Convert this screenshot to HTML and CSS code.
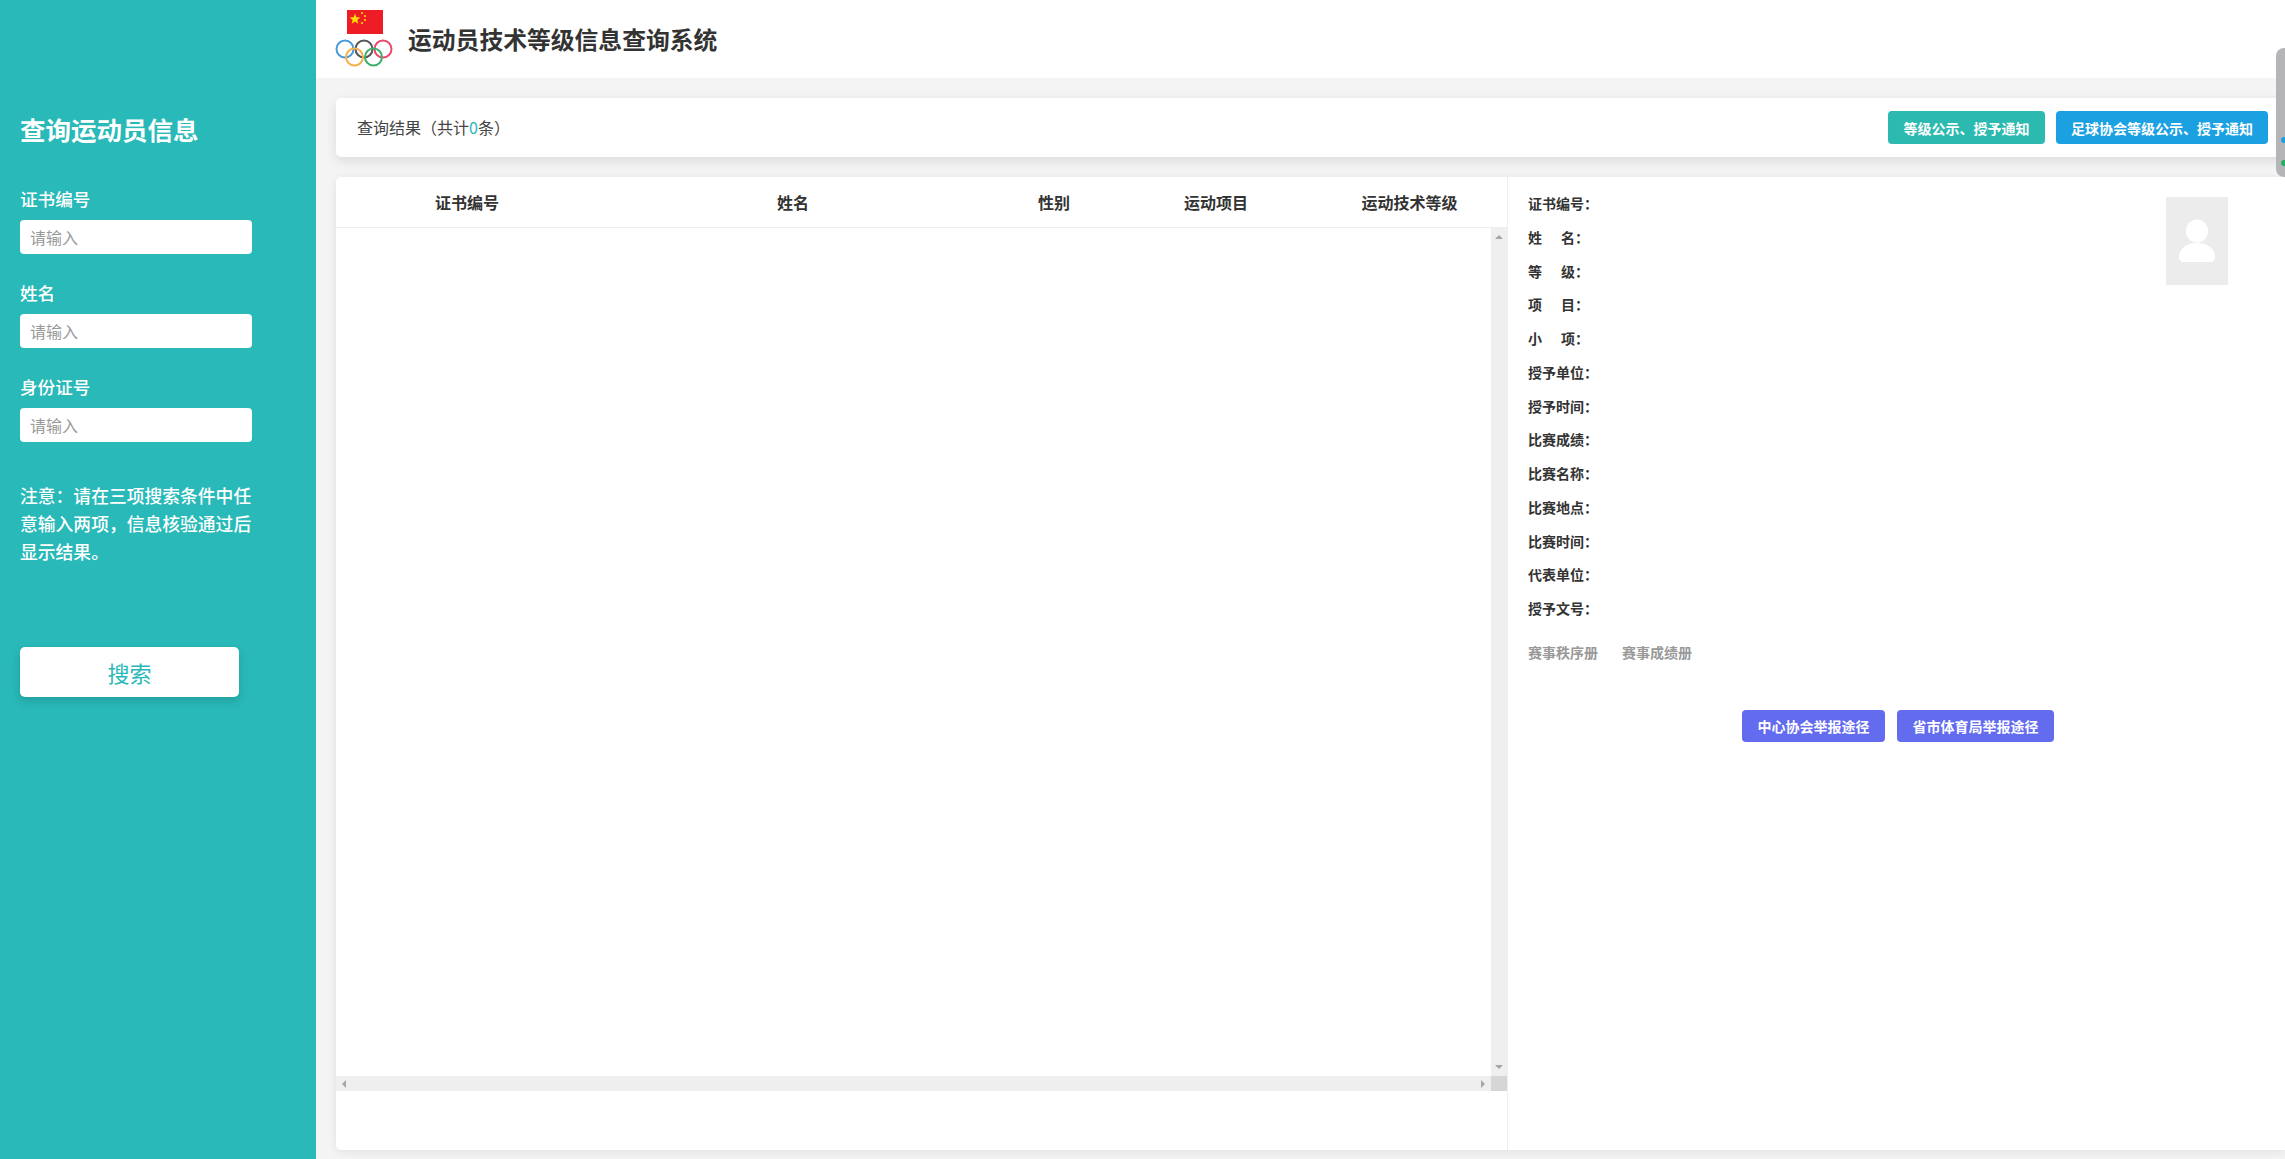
FILE: index.html
```html
<!DOCTYPE html>
<html lang="zh-CN">
<head>
  <meta charset="UTF-8">
  <meta name="viewport" content="width=device-width, initial-scale=1">
  <title>运动员技术等级信息查询系统</title>
  <link rel="stylesheet" href="styles.css">
</head>
<body>

<aside class="sidebar">
  <h2>查询运动员信息</h2>
  <label for="certNo" class="first">证书编号</label>
  <input type="text" id="certNo" placeholder="请输入">
  <label for="name">姓名</label>
  <input type="text" id="name" placeholder="请输入">
  <label for="idNo">身份证号</label>
  <input type="text" id="idNo" placeholder="请输入">
  <p class="note">注意：请在三项搜索条件中任意输入两项，信息核验通过后显示结果。</p>
  <button class="search-btn" type="button">搜索</button>
</aside>

<div class="page">
  <header class="header">
    <div class="logo">
      <svg width="36" height="24" viewBox="0 0 36 24" class="flag">
        <rect width="36" height="24" fill="#ee1c25"/>
        <polygon fill="#ffe000" points="8,3.5 9.4,7.2 13.4,7.4 10.3,9.9 11.3,13.7 8,11.6 4.7,13.7 5.7,9.9 2.6,7.4 6.6,7.2"/>
        <circle cx="15" cy="3" r="1.1" fill="#ffe000"/>
        <circle cx="18" cy="6" r="1.1" fill="#ffe000"/>
        <circle cx="18" cy="10" r="1.1" fill="#ffe000"/>
        <circle cx="15" cy="13" r="1.1" fill="#ffe000"/>
      </svg>
      <svg width="60" height="28" viewBox="0 0 60 28" class="rings" fill="none" stroke-width="2">
        <circle cx="10" cy="10" r="8.5" stroke="#4a9bd8"/>
        <circle cx="29" cy="10" r="8.5" stroke="#555"/>
        <circle cx="48" cy="10" r="8.5" stroke="#e9496f"/>
        <circle cx="19.5" cy="18" r="8.5" stroke="#f5b04c"/>
        <circle cx="38.5" cy="18" r="8.5" stroke="#3fae6c"/>
      </svg>
    </div>
    <h1>运动员技术等级信息查询系统</h1>
  </header>

  <div class="content">
    <div class="result-bar">
      <span class="count">查询结果（共计<em>0</em>条）</span>
      <div class="bar-btns">
        <button class="btn btn-teal" type="button">等级公示、授予通知</button>
        <button class="btn btn-blue" type="button">足球协会等级公示、授予通知</button>
      </div>
    </div>

    <div class="main-card">
      <div class="table-pane">
        <div class="table-head">
          <div class="col-1">证书编号</div>
          <div class="col-2">姓名</div>
          <div class="col-3">性别</div>
          <div class="col-4">运动项目</div>
          <div class="col-5">运动技术等级</div>
        </div>
        <div class="table-body">
          <div class="table-rows"></div>
          <div class="scroll-v">
            <span class="arrow arrow-up"></span>
            <span class="arrow arrow-down"></span>
          </div>
        </div>
        <div class="scroll-h">
          <div class="scroll-h-track">
            <span class="arrow arrow-left"></span>
            <span class="arrow arrow-right"></span>
          </div>
          <div class="scroll-corner"></div>
        </div>
      </div>

      <div class="detail-pane">
        <div class="detail-top">
          <ul class="info">
            <li>证书编号：</li>
            <li>姓<span class="gap"></span>名：</li>
            <li>等<span class="gap"></span>级：</li>
            <li>项<span class="gap"></span>目：</li>
            <li>小<span class="gap"></span>项：</li>
            <li>授予单位：</li>
            <li>授予时间：</li>
            <li>比赛成绩：</li>
            <li>比赛名称：</li>
            <li>比赛地点：</li>
            <li>比赛时间：</li>
            <li>代表单位：</li>
            <li>授予文号：</li>
          </ul>
          <div class="photo">
            <svg width="62" height="88" viewBox="0 0 62 88">
              <ellipse cx="31" cy="34" rx="11" ry="11.5" fill="#fff"/>
              <path d="M13 60c0-9 8-14 18-14s18 5 18 14c0 3-2 5-5 5H18c-3 0-5-2-5-5z" fill="#fff"/>
            </svg>
          </div>
        </div>
        <div class="links">
          <a>赛事秩序册</a>
          <a>赛事成绩册</a>
        </div>
        <div class="report-btns">
          <button class="btn btn-purple" type="button">中心协会举报途径</button>
          <button class="btn btn-purple" type="button">省市体育局举报途径</button>
        </div>
      </div>
    </div>
  </div>
</div>

<div class="side-handle">
  <span class="dot dot-blue"></span>
  <span class="dot dot-green"></span>
</div>

</body>
</html>
```

FILE: styles.css
```css
* {
  box-sizing: border-box;
  font-family: "Noto Sans CJK SC", "Noto Sans", sans-serif;
}

body {
  display: flex;
  height: 100vh;
  margin: 0;
  overflow: hidden;
  background: #f4f4f4;
  color: #333;
}

.sidebar {
  flex: 0 0 316px;
  padding: 111px 0 0 20px;
  background: #28b9b8;
  color: #fff;
}

.sidebar h2 {
  margin: 0;
  font-size: 25.5px;
  line-height: 36px;
  font-weight: 700;
}

.sidebar label {
  display: block;
  margin-top: 26px;
  font-size: 17.6px;
  line-height: 26px;
  font-weight: 500;
}

.sidebar label.first {
  margin-top: 39px;
}

.sidebar input {
  display: block;
  width: 232px;
  height: 34px;
  margin-top: 8px;
  padding: 0 10px;
  border: none;
  border-radius: 4px;
  background: #fff;
  font-size: 16px;
}

.sidebar input::placeholder {
  color: #999;
}

.note {
  width: 240px;
  margin: 39px 0 0;
  font-size: 17.8px;
  line-height: 28px;
  font-weight: 500;
}

.search-btn {
  display: block;
  width: 219px;
  height: 50px;
  margin-top: 82px;
  border: none;
  border-radius: 5px;
  background: #fff;
  color: #28b9b8;
  font-size: 22px;
  box-shadow: 0 4px 10px rgba(0, 0, 0, 0.15);
}

.page {
  flex: 1;
  min-width: 0;
  display: flex;
  flex-direction: column;
}

.header {
  flex: 0 0 78px;
  display: flex;
  align-items: center;
  gap: 15px;
  padding-left: 20px;
  background: #fff;
}

.logo {
  display: flex;
  flex-direction: column;
  align-items: center;
  width: 57px;
  height: 78px;
  padding-top: 10px;
}

.flag {
  flex: none;
}

.rings {
  flex: none;
  margin-top: 5px;
}

.header h1 {
  margin: 0 0 1px;
  font-size: 23.8px;
  line-height: 34px;
  font-weight: 700;
  color: #333;
}

.content {
  flex: 1;
  min-height: 0;
  display: flex;
  flex-direction: column;
  gap: 20px;
  padding: 20px 0 9px 20px;
}

.result-bar {
  flex: 0 0 59px;
  display: flex;
  align-items: center;
  justify-content: space-between;
  padding: 0 17px 0 21px;
  border-radius: 5px 0 0 5px;
  background: #fff;
  box-shadow: 0 4px 12px rgba(0, 0, 0, 0.1);
}

.count {
  margin-bottom: 1px;
  font-size: 16px;
  color: #444;
}

.count em {
  font-style: normal;
  color: #28b9b8;
}

.bar-btns {
  display: flex;
  gap: 11px;
}

.btn {
  height: 33px;
  padding: 0 15.5px;
  border: none;
  border-radius: 4px;
  color: #fff;
  font-size: 14px;
  font-weight: 700;
}

.btn-teal {
  background: #2bb9b0;
}

.btn-blue {
  padding: 0 15px;
  background: #1ba1e2;
}

.btn-purple {
  height: 32px;
  background: #636bef;
}

.main-card {
  flex: 1;
  min-height: 0;
  display: flex;
  border-radius: 5px 0 0 5px;
  background: #fff;
  box-shadow: 0 2px 10px rgba(0, 0, 0, 0.08);
}

.table-pane {
  flex: 0 0 1172px;
  display: flex;
  flex-direction: column;
  padding-bottom: 59px;
  border-right: 1px solid #eee;
}

.table-head {
  flex: 0 0 51px;
  display: grid;
  grid-template-columns: 262px 390px 132px 192px 195px;
  align-items: center;
  padding-bottom: 1px;
  border-bottom: 1px solid #eee;
  font-size: 16px;
  font-weight: 700;
  text-align: center;
}

.table-body {
  flex: 1;
  min-height: 0;
  display: flex;
}

.table-rows {
  flex: 1;
}

.scroll-v {
  flex: 0 0 16px;
  display: flex;
  flex-direction: column;
  justify-content: space-between;
  align-items: center;
  padding: 7px 0;
  background: #efefef;
}

.scroll-h {
  flex: 0 0 15px;
  display: flex;
}

.scroll-h-track {
  flex: 1;
  display: flex;
  justify-content: space-between;
  align-items: center;
  padding: 0 6px;
  background: #efefef;
}

.scroll-corner {
  flex: 0 0 16px;
  background: #d6d6d6;
}

.arrow {
  display: block;
  width: 0;
  height: 0;
  border: 4px solid transparent;
}

.arrow-up {
  border-top: none;
  border-bottom-color: #a6a6a6;
}

.arrow-down {
  border-bottom: none;
  border-top-color: #a6a6a6;
}

.arrow-left {
  border-left: none;
  border-right-color: #a6a6a6;
}

.arrow-right {
  border-right: none;
  border-left-color: #a6a6a6;
}

.detail-pane {
  flex: 1;
  min-width: 0;
  padding: 10px 0 0 20px;
}

.detail-top {
  display: flex;
  justify-content: space-between;
  align-items: flex-start;
}

.info {
  margin: 0;
  padding: 0;
  list-style: none;
  font-size: 14px;
  line-height: 33.75px;
  font-weight: 700;
  color: #333;
}

.gap {
  display: inline-block;
  width: 19px;
}

.photo {
  width: 62px;
  height: 88px;
  margin: 10px 57px 0 0;
  background: #ececec;
}

.photo svg {
  display: block;
}

.links {
  display: flex;
  gap: 24px;
  margin-top: 16px;
  font-size: 14px;
  line-height: 20px;
  font-weight: 700;
  color: #999;
}

.report-btns {
  display: flex;
  gap: 12px;
  margin-top: 48px;
  padding-left: 214px;
}

/* handle of a browser extension, sits over the page edge */
.side-handle {
  position: absolute;
  top: 48px;
  right: 0;
  width: 9px;
  height: 129px;
  border-radius: 8px 0 0 8px;
  background: #b5b5b8;
}

.dot {
  position: absolute;
  right: 0;
  width: 4px;
  height: 6px;
  border-radius: 3px 0 0 3px;
}

.dot-blue {
  top: 89px;
  background: #1ba1e2;
}

.dot-green {
  top: 112px;
  background: #27ae60;
}
```
